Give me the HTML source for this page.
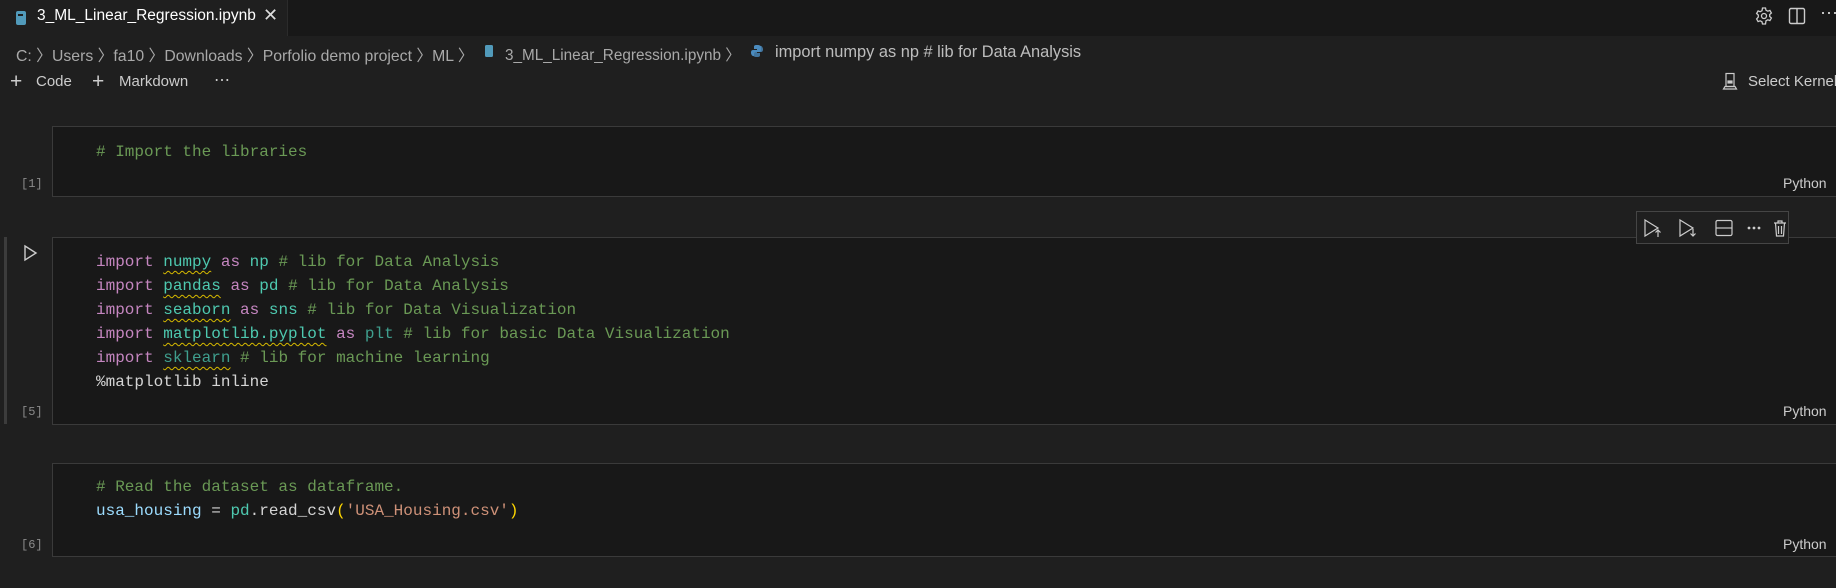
<!DOCTYPE html>
<html><head><meta charset="utf-8"><style>
*{margin:0;padding:0;box-sizing:border-box}
body{width:1836px;height:588px;background:#1f1f1f;overflow:hidden;position:relative;font-family:"Liberation Sans",sans-serif;color:#cccccc}
.abs{position:absolute;white-space:nowrap}
.tabbar{position:absolute;left:0;top:0;width:1836px;height:36px;background:#181818}
.tab{position:absolute;left:0;top:0;width:288px;height:36px;background:#1f1f1f;border-right:1px solid #2b2b2b}
.ui{font-size:15px;color:#cccccc}
.bc{font-size:15.8px;color:#a9a9a9}
.cell{position:absolute;left:52px;right:0;background:#181818;border:1px solid #3a3a3a;border-right:none}
.code{font-family:"Liberation Mono",monospace;font-size:16px;line-height:24px;color:#d4d4d4;white-space:pre}
.k{color:#c586c0}.m{color:#4ec9b0}.c{color:#6a9955}.v{color:#9cdcfe}.s{color:#ce9178}.p{color:#ffd700}.d{color:#3f9f8e}
.sq{text-decoration:underline wavy #d7ba00;text-decoration-thickness:1px;text-underline-offset:4px}
.cnt{font-family:"Liberation Mono",monospace;font-size:12px;color:#8a8a8a}
.py{font-size:14px;color:#cccccc}
</style></head><body>
<div class="tabbar"></div>
<div class="tab"></div>
<svg class="abs" style="left:15px;top:10px" width="12" height="16" viewBox="0 0 12 16"><rect x="1" y="1" width="10" height="14" rx="2" fill="#519aba"/><rect x="3" y="4" width="5" height="2" fill="#1f1f1f"/></svg>
<div class="abs ui" style="left:37px;top:7px;font-size:15.5px;color:#ffffff">3_ML_Linear_Regression.ipynb</div>
<div class="abs" style="left:263px;top:5px;font-size:18px;color:#dddddd">✕</div>
<svg class="abs" style="left:1754px;top:6px" width="20" height="20" viewBox="0 0 20 20" fill="none" stroke="#cccccc" stroke-width="1.3"><circle cx="10" cy="10" r="2.5"/><path d="M8.5 2h3l.5 2.2 1.8 1 2.1-.8 1.5 2.6-1.7 1.5v2l1.7 1.5-1.5 2.6-2.1-.8-1.8 1L11.5 18h-3l-.5-2.2-1.8-1-2.1.8-1.5-2.6L4.3 11V9L2.6 7.5l1.5-2.6 2.1.8 1.8-1z"/></svg>
<svg class="abs" style="left:1788px;top:6px" width="18" height="20" viewBox="0 0 18 20" fill="none" stroke="#cccccc" stroke-width="1.4"><rect x="1.5" y="2.5" width="15" height="15" rx="1.5"/><line x1="9" y1="2.5" x2="9" y2="17.5"/></svg>
<div class="abs" style="left:1820px;top:3px;font-size:18px;color:#ccc">⋯</div>

<div class="abs bc" style="left:16px;top:43px">C: 〉Users 〉fa10 〉Downloads 〉Porfolio demo project 〉ML 〉</div>
<svg class="abs" style="left:484px;top:44px" width="10" height="14" viewBox="0 0 10 14"><rect x="1" y="1" width="8" height="12" rx="1.5" fill="#519aba"/></svg>
<div class="abs bc" style="left:505px;top:43px;font-size:15.3px">3_ML_Linear_Regression.ipynb 〉</div>
<svg class="abs" style="left:750px;top:44px" width="14" height="14" viewBox="0 0 14 14"><path d="M7 1C4 1 4 2 4 3v2h3v1H3C1 6 1 8 1 9s1 3 2 3h1v-2c0-1 1-2 2-2h3c1 0 2-1 2-2V3c0-1-1-2-4-2z" fill="#4b8bbe"/><path d="M7 13c3 0 3-1 3-2V9H7V8h4c2 0 2-2 2-3s-1-3-2-3h-1v2c0 1-1 2-2 2H5c-1 0-2 1-2 2v3c0 1 1 2 4 2z" fill="#4b8bbe" opacity=".8"/></svg>
<div class="abs bc" style="left:775px;top:43px;color:#bdbdbd;font-size:16.4px">import numpy as np # lib for Data Analysis</div>

<div class="abs ui" style="left:10px;top:70px;font-size:21px;font-weight:300">+</div>
<div class="abs ui" style="left:36px;top:73px">Code</div>
<div class="abs ui" style="left:92px;top:70px;font-size:21px">+</div>
<div class="abs ui" style="left:119px;top:73px">Markdown</div>
<div class="abs ui" style="left:214px;top:70px;font-size:16px">⋯</div>
<svg class="abs" style="left:1722px;top:72px" width="16" height="18" viewBox="0 0 16 18" fill="none" stroke="#cccccc" stroke-width="1.2"><rect x="4" y="1.5" width="8" height="13"/><rect x="6" y="9" width="4" height="2" fill="#ccc"/><path d="M1.5 17h13l-1.5-2.5h-10z"/></svg>
<div class="abs ui" style="left:1748px;top:73px">Select Kernel</div>

<div class="cell" style="top:126px;height:71px"></div>
<div class="abs code" style="left:96px;top:140px"><span class="c"># Import the libraries</span></div>
<div class="abs cnt" style="left:21px;top:177px">[1]</div>
<div class="abs py" style="left:1783px;top:175px">Python</div>

<div class="abs" style="left:4px;top:237px;width:3px;height:187px;background:#3c3c3c"></div>
<div class="cell" style="top:237px;height:188px"></div>
<svg class="abs" style="left:22px;top:244px" width="16" height="18" viewBox="0 0 16 18" fill="none" stroke="#cccccc" stroke-width="1.4"><path d="M3 2l11 7-11 7z"/></svg>
<div class="abs code" style="left:96px;top:250px"><span class="k">import</span> <span class="m sq">numpy</span> <span class="k">as</span> <span class="m">np</span> <span class="c"># lib for Data Analysis</span>
<span class="k">import</span> <span class="m sq">pandas</span> <span class="k">as</span> <span class="m">pd</span> <span class="c"># lib for Data Analysis</span>
<span class="k">import</span> <span class="m sq">seaborn</span> <span class="k">as</span> <span class="m">sns</span> <span class="c"># lib for Data Visualization</span>
<span class="k">import</span> <span class="m sq">matplotlib.pyplot</span> <span class="k">as</span> <span class="d">plt</span> <span class="c"># lib for basic Data Visualization</span>
<span class="k">import</span> <span class="d sq">sklearn</span> <span class="c"># lib for machine learning</span>
%matplotlib inline</div>
<div class="abs cnt" style="left:21px;top:405px">[5]</div>
<div class="abs py" style="left:1783px;top:403px">Python</div>

<div class="abs" style="left:1636px;top:211px;width:153px;height:33px;background:#1f1f1f;border:1px solid #454545"></div>
<svg class="abs" style="left:1643px;top:217px" width="145" height="22" viewBox="0 0 145 22" fill="none" stroke="#cccccc" stroke-width="1.2"><path d="M2 3l13 8-13 8z"/><path d="M15 20v-7M12.5 15.5L15 13l2.5 2.5"/><path d="M37 3l13 8-13 8z"/><path d="M50 12v7M47.5 16.5L50 19l2.5-2.5"/><rect x="73" y="3.5" width="16" height="15" rx="1.5"/><line x1="73" y1="11" x2="89" y2="11"/><circle cx="106" cy="11" r=".8" fill="#ccc"/><circle cx="111" cy="11" r=".8" fill="#ccc"/><circle cx="116" cy="11" r=".8" fill="#ccc"/><path d="M131 6h12M135 6V4h4v2M132.5 6l1 13h7l1-13M135.5 9v8M138.5 9v8"/></svg>

<div class="cell" style="top:463px;height:94px"></div>
<div class="abs code" style="left:96px;top:475px"><span class="c"># Read the dataset as dataframe.</span>
<span class="v">usa_housing</span> = <span class="m">pd</span>.read_csv<span class="p">(</span><span class="s">'USA_Housing.csv'</span><span class="p">)</span></div>
<div class="abs cnt" style="left:21px;top:538px">[6]</div>
<div class="abs py" style="left:1783px;top:536px">Python</div>
</body></html>
